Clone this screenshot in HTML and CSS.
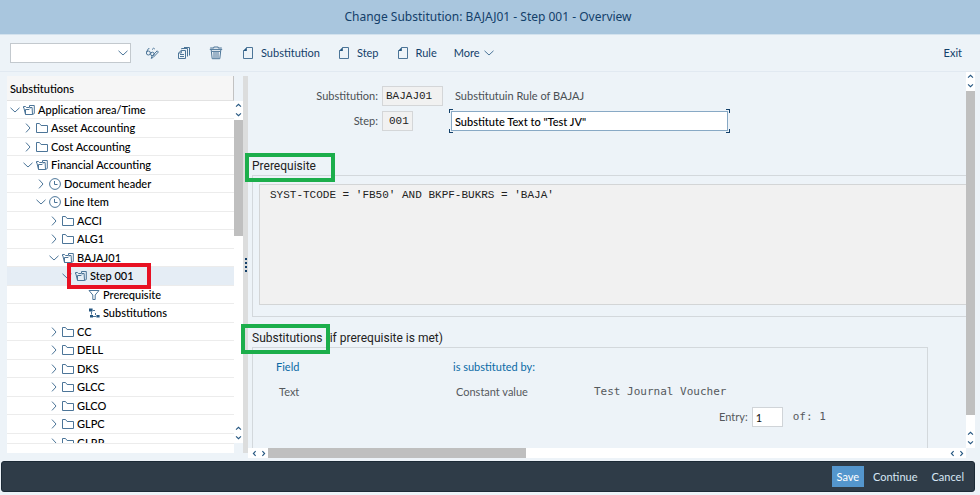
FILE: index.html
```html
<!DOCTYPE html>
<html lang="en">
<head>
  <meta charset="UTF-8" />
  <meta name="viewport" content="width=device-width, initial-scale=1.0"/>
  <title>Change Substitution: BAJAJ01 - Step 001 - Overview</title>
  <link rel="stylesheet" href="styles.css">
</head>
<body>

  <!-- Icon set -->
  <svg class="sprite" aria-hidden="true">
    <symbol id="right" viewBox="0 0 10 10"><path d="M3 .6 7 5 3 9.4"/></symbol>
    <symbol id="down" viewBox="0 0 10 10"><path d="M.5 2.8 5 7 9.5 2.8"/></symbol>
    <symbol id="folder" viewBox="0 0 12 12"><path d="M.5 10.5v-9h3l1.6 2h6.4v7z"/></symbol>
    <symbol id="folder-open" viewBox="0 0 12 12"><path d="M2.5 10.5.8 3.5M.5 4V2.5h2l1 1h2.5"/><path d="M2.5 10.5h7l1.8-1v-8H6.5v2h2.6l.4 7M2.5 10.5v-5h3.6l1-1"/></symbol>
    <symbol id="clock" viewBox="0 0 12 12"><circle cx="6" cy="6" r="5.4"/><path d="M5.5 3v3.5h3"/></symbol>
    <symbol id="filter" viewBox="0 0 12 12"><path d="M1 1.5h10L7.2 6v4.5H4.8V6z"/></symbol>
    <symbol id="flow" viewBox="0 0 12 12"><path class="solid" d="M1 1.5h3.6v3H1zM2 8h3v2.6H2zM8.4 8h3.2v2.6H8.4z"/><path d="M5 3.5h2M3.5 4.5v3M5 9.5h3M7.5 6v2"/></symbol>
    <symbol id="page" viewBox="0 0 12 14"><path d="M4.5 1.5h6v11h-9v-8"/><path class="solid" d="M1 5 4.8 1v4z"/></symbol>
    <symbol id="glasses" viewBox="0 0 14 14"><circle cx="3.4" cy="7" r="2"/><circle cx="7.4" cy="8" r="1.8"/><path d="M1.5 6 3.4 2.6h1M5.2 6.8l.6.4M7 3.6l1.6-1.4 1.2.8M6.2 12.4l.8-2.2 5.2-5.4 1.2 1.2-5.2 5.4z"/></symbol>
    <symbol id="copy" viewBox="0 0 14 14"><path d="M4.2 4.5h4.3v8h-7V7z"/><path d="M4.5 3.2v-.7h6v8M7 1.5h5.5v8M1.5 7h2.8V4.5M3 8.5h4M3 10.5h4"/></symbol>
    <symbol id="trash" viewBox="0 0 14 14"><path d="M.8 3.4h12.4M1.2 2h3.6V1h4.4v1h3.6M2.2 4l1 8.7h7.6l1-8.7M3 5.4h8M5 6v6M7 6v6M9 6v6"/></symbol>
    <symbol id="arrow-up" viewBox="0 0 8 8"><path d="M1.8 5 4 3l2.2 2"/></symbol>
    <symbol id="arrow-down" viewBox="0 0 8 8"><path d="M1.8 3 4 5l2.2-2"/></symbol>
    <symbol id="arrow-left" viewBox="0 0 8 8"><path d="M5 1.8 3 4l2 2.2"/></symbol>
    <symbol id="arrow-right" viewBox="0 0 8 8"><path d="M3 1.8 5 4 3 6.2"/></symbol>
  </svg>

  <header class="titlebar"><h1>Change Substitution: BAJAJ01 - Step 001 - Overview</h1></header>

  <nav class="toolbar" aria-label="Toolbar">
    <div class="command">
      <select aria-label="Command"><option></option></select>
      <svg class="icon"><use href="#down"/></svg>
    </div>
    <button class="tool" aria-label="Display or change"><svg class="icon"><use href="#glasses"/></svg></button>
    <button class="tool" aria-label="Copy"><svg class="icon"><use href="#copy"/></svg></button>
    <button class="tool" aria-label="Delete"><svg class="icon"><use href="#trash"/></svg></button>
    <button class="tool labelled"><svg class="icon"><use href="#page"/></svg>Substitution</button>
    <button class="tool labelled"><svg class="icon"><use href="#page"/></svg>Step</button>
    <button class="tool labelled"><svg class="icon"><use href="#page"/></svg>Rule</button>
    <button class="tool more">More<svg class="icon"><use href="#down"/></svg></button>
    <button class="tool exit">Exit</button>
  </nav>

  <main class="workspace">

    <!-- Tree -->
    <aside class="tree-panel">
      <h2>Substitutions</h2>
      <div class="tree-body">
        <ul class="tree">
          <li class="level-0"><svg class="twist"><use href="#down"/></svg><svg class="icon"><use href="#folder-open"/></svg>Application area/Time</li>
          <li class="level-1"><svg class="twist"><use href="#right"/></svg><svg class="icon"><use href="#folder"/></svg>Asset Accounting</li>
          <li class="level-1"><svg class="twist"><use href="#right"/></svg><svg class="icon"><use href="#folder"/></svg>Cost Accounting</li>
          <li class="level-1"><svg class="twist"><use href="#down"/></svg><svg class="icon"><use href="#folder-open"/></svg>Financial Accounting</li>
          <li class="level-2"><svg class="twist"><use href="#right"/></svg><svg class="icon"><use href="#clock"/></svg>Document header</li>
          <li class="level-2"><svg class="twist"><use href="#down"/></svg><svg class="icon"><use href="#clock"/></svg>Line Item</li>
          <li class="level-3"><svg class="twist"><use href="#right"/></svg><svg class="icon"><use href="#folder"/></svg>ACCI</li>
          <li class="level-3"><svg class="twist"><use href="#right"/></svg><svg class="icon"><use href="#folder"/></svg>ALG1</li>
          <li class="level-3"><svg class="twist"><use href="#down"/></svg><svg class="icon"><use href="#folder-open"/></svg>BAJAJ01</li>
          <li class="level-4 selected"><svg class="twist"><use href="#down"/></svg><svg class="icon"><use href="#folder-open"/></svg>Step 001<span class="mark mark-step"></span></li>
          <li class="level-5"><svg class="icon"><use href="#filter"/></svg>Prerequisite</li>
          <li class="level-5"><svg class="icon"><use href="#flow"/></svg>Substitutions</li>
          <li class="level-3"><svg class="twist"><use href="#right"/></svg><svg class="icon"><use href="#folder"/></svg>CC</li>
          <li class="level-3"><svg class="twist"><use href="#right"/></svg><svg class="icon"><use href="#folder"/></svg>DELL</li>
          <li class="level-3"><svg class="twist"><use href="#right"/></svg><svg class="icon"><use href="#folder"/></svg>DKS</li>
          <li class="level-3"><svg class="twist"><use href="#right"/></svg><svg class="icon"><use href="#folder"/></svg>GLCC</li>
          <li class="level-3"><svg class="twist"><use href="#right"/></svg><svg class="icon"><use href="#folder"/></svg>GLCO</li>
          <li class="level-3"><svg class="twist"><use href="#right"/></svg><svg class="icon"><use href="#folder"/></svg>GLPC</li>
          <li class="level-3"><svg class="twist"><use href="#right"/></svg><svg class="icon"><use href="#folder"/></svg>GLRR</li>
        </ul>
        <div class="vscroll">
          <div class="arrows"><svg><use href="#arrow-up"/></svg><svg><use href="#arrow-down"/></svg></div>
          <div class="track"><div class="thumb tree-thumb"></div></div>
          <div class="arrows"><svg><use href="#arrow-up"/></svg><svg><use href="#arrow-down"/></svg></div>
        </div>
      </div>
      <div class="tree-foot"></div>
    </aside>

    <div class="splitter"><i></i><i></i><i></i><i></i></div>

    <!-- Detail -->
    <section class="detail">
      <div class="detail-view">
        <div class="content">
          <form class="keys">
            <label for="subst">Substitution:</label>
            <input id="subst" class="locked" size="7" value="BAJAJ01" readonly>
            <span class="note">Substitutuin Rule of BAJAJ</span>
            <label for="step">Step:</label>
            <input id="step" class="locked short" value="001" readonly>
            <div class="focus"><input class="text" aria-label="Step text" value='Substitute Text to "Test JV"'></div>
          </form>

          <section class="group">
            <h3>Prerequisite<span class="mark mark-prereq"></span></h3>
            <div class="frame open">
              <textarea class="formula" aria-label="Prerequisite" readonly>SYST-TCODE = 'FB50' AND BKPF-BUKRS = 'BAJA'</textarea>
            </div>
          </section>

          <section class="group">
            <h3>Substitutions (if prerequisite is met)<span class="mark mark-subst"></span></h3>
            <div class="frame rules">
              <table>
                <thead>
                  <tr><th>Field</th><th>is substituted by:</th><th></th></tr>
                </thead>
                <tbody>
                  <tr><td>Text</td><td>Constant value</td><td class="mono">Test Journal Voucher</td></tr>
                </tbody>
              </table>
              <div class="entry">
                <label for="entry">Entry:</label>
                <input id="entry" value="1">
                <span class="mono">of: 1</span>
              </div>
            </div>
          </section>
        </div>
        <div class="hscroll">
          <div class="arrows"><svg><use href="#arrow-left"/></svg><svg><use href="#arrow-right"/></svg></div>
          <div class="track"><div class="thumb"></div></div>
          <div class="arrows"><svg><use href="#arrow-left"/></svg><svg><use href="#arrow-right"/></svg></div>
        </div>
      </div>
      <div class="vscroll page-scroll">
        <div class="arrows"><svg><use href="#arrow-up"/></svg><svg><use href="#arrow-down"/></svg></div>
        <div class="track"><div class="thumb page-thumb"></div></div>
        <div class="arrows"><svg><use href="#arrow-up"/></svg><svg><use href="#arrow-down"/></svg></div>
      </div>
    </section>
  </main>

  <footer class="footer">
    <button class="primary">Save</button>
    <button>Continue</button>
    <button>Cancel</button>
  </footer>

</body>
</html>
```

FILE: styles.css
```css
* {
  box-sizing: border-box;
}

body {
  margin: 0;
  height: 100vh;
  display: flex;
  flex-direction: column;
  overflow: hidden;
  background: #edf3f8;
  color: #000;
  font: 11px/18px Lato, sans-serif;
}

h1, h2, h3, ul {
  margin: 0;
  padding: 0;
  font-weight: 400;
}

button, input, select, textarea {
  margin: 0;
  font: inherit;
  color: inherit;
}

button {
  border: 0;
  background: none;
}

svg {
  flex: none;
  fill: none;
  stroke: #4c7598;
  stroke-width: 1;
}

.solid {
  fill: #245680;
  stroke: none;
}

.sprite {
  position: absolute;
  width: 0;
  height: 0;
}

.mono {
  font-family: "DejaVu Sans Mono", monospace;
}

/* Title and toolbar */
.titlebar {
  flex: none;
  height: 35px;
  background: #a9c6de;
  border-bottom: 1px solid #d3e2ee;
  text-align: center;
}

.titlebar h1 {
  padding-right: 4px;
  font-family: "Noto Sans", sans-serif;
  font-size: 12px;
  line-height: 33px;
  color: #13406a;
}

.toolbar {
  flex: none;
  display: flex;
  align-items: center;
  height: 37px;
  padding: 0 18px 0 10px;
  border-bottom: 1px solid #e1e9f1;
  color: #13406a;
}

.command {
  position: relative;
  width: 121px;
  margin-right: 14px;
}

.command select {
  appearance: none;
  display: block;
  width: 100%;
  height: 20px;
  background: #fff;
  border: 1px solid #c3c9ce;
}

.command .icon {
  position: absolute;
  top: 5px;
  right: 3px;
  width: 10px;
  height: 10px;
}

.tool {
  display: flex;
  align-items: center;
  padding: 0;
  margin-right: 18px;
}

.tool .icon {
  width: 14px;
  height: 14px;
}

.labelled {
  gap: 6px;
  margin-right: 17px;
}

.more {
  gap: 4px;
}

.more .icon {
  width: 10px;
  height: 10px;
}

.exit {
  margin: 0 0 0 auto;
}

.workspace {
  flex: 1;
  display: flex;
  min-height: 0;
  padding: 0 5px 0 7px;
}

/* Tree */
.tree-panel {
  width: 236px;
  flex: none;
  display: flex;
  flex-direction: column;
  margin: 4px 0 5px;
}

.tree-panel h2 {
  flex: none;
  height: 25px;
  margin-right: 9px;
  padding-left: 3px;
  background: #f6f6f6;
  border: solid #e2e2e2;
  border-width: 0 1px 1px 0;
  border-right-color: #c2c2c2;
  font-size: 11px;
  font-weight: 500;
  line-height: 25px;
}

.tree-body {
  flex: 1;
  display: flex;
  min-height: 0;
}

.tree {
  flex: 1;
  overflow: hidden;
  background: #fff;
  list-style: none;
}

.tree li {
  position: relative;
  display: flex;
  align-items: center;
  height: 18px;
  border-bottom: 1px solid #ececec;
  font-weight: 500;
  white-space: nowrap;
}

.tree li:nth-child(even) {
  height: 19px;
}

.tree .twist {
  width: 10px;
  height: 10px;
  margin-right: 3px;
}

.tree .icon {
  width: 12px;
  height: 12px;
  margin-right: 3px;
}

.level-0 { padding-left: 3px; }
.level-1 { padding-left: 16px; }
.level-2 { padding-left: 29px; }
.level-3 { padding-left: 42px; }
.level-4 { padding-left: 55px; }
.level-5 { padding-left: 81px; }

.tree .selected {
  background: #e5edf5;
}

.tree-foot {
  flex: none;
  height: 10px;
  margin-right: 9px;
  background: #fff;
  border-top: 1px solid #ececec;
}

/* Scrollbars */
.vscroll {
  flex: none;
  display: flex;
  flex-direction: column;
  width: 9px;
  background: #fff;
}

.arrows {
  flex: none;
  display: flex;
}

.arrows svg {
  width: 9px;
  height: 9px;
  stroke: #245680;
}

.vscroll .arrows {
  flex-direction: column;
  padding-bottom: 1px;
}

.track {
  flex: 1;
}

.thumb {
  background: #bfbfbf;
}

.tree-thumb {
  height: 38%;
}

.page-thumb {
  height: 96%;
}

.page-scroll {
  margin-bottom: 10px;
}

.hscroll {
  flex: none;
  display: flex;
  align-items: center;
  height: 10px;
  padding-left: 2px;
  background: #fff;
}

.hscroll .thumb {
  width: 38%;
  height: 10px;
}

.splitter {
  flex: none;
  display: flex;
  flex-direction: column;
  justify-content: center;
  align-items: center;
  gap: 2px;
  width: 5px;
  margin: 4px 0 5px;
  background: #dcdddd;
}

.splitter i {
  width: 2px;
  height: 2px;
  background: #13406a;
}

/* Detail */
.detail {
  flex: 1;
  display: flex;
  min-width: 0;
}

.detail-view {
  flex: 1;
  display: flex;
  flex-direction: column;
  min-width: 0;
}

/* reaches over the splitter so the callouts are not clipped */
.content {
  flex: 1;
  min-height: 0;
  overflow: hidden;
  margin-left: -8px;
  padding: 14px 0 0 12px;
}

.keys {
  display: grid;
  grid-template-columns: 126px 65px 1fr;
  gap: 5px 4px;
  align-items: center;
  color: #4a4f54;
}

.keys label {
  text-align: right;
}

.keys .locked {
  width: 61px;
  height: 20px;
  padding: 0 3px;
  background: #f1f1f1;
  border: 1px solid #d4d6d8;
  color: #222;
  font-family: "Liberation Mono", monospace;
}

.keys .short {
  width: 31px;
  padding-left: 6px;
}

.note {
  padding-left: 4px;
}

/* corner brackets round the focused field */
.focus {
  width: 281px;
  margin: -2px;
  padding: 2px;
  background:
    linear-gradient(#13406a, #13406a) 0 0 / 4px 1px,
    linear-gradient(#13406a, #13406a) 0 0 / 1px 4px,
    linear-gradient(#13406a, #13406a) 100% 0 / 4px 1px,
    linear-gradient(#13406a, #13406a) 100% 0 / 1px 4px,
    linear-gradient(#13406a, #13406a) 0 100% / 4px 1px,
    linear-gradient(#13406a, #13406a) 0 100% / 1px 4px,
    linear-gradient(#13406a, #13406a) 100% 100% / 4px 1px,
    linear-gradient(#13406a, #13406a) 100% 100% / 1px 4px;
  background-repeat: no-repeat;
}

.focus .text {
  display: block;
  width: 100%;
  height: 20px;
  padding: 0 3px;
  background: #fff;
  border: 1px solid #88a9c5;
  color: #000;
  font-weight: 500;
}

.group h3 {
  position: relative;
  font-family: Roboto, sans-serif;
  font-size: 12px;
  line-height: 18px;
  color: #222;
}

.group {
  margin-top: 12px;
}

.keys + .group {
  margin-top: 26px;
}

.frame {
  border: 1px solid #d3d8dc;
}

.frame.open {
  padding: 8px 0 11px 6px;
  border-right: 0;
}

.formula {
  display: block;
  width: 100%;
  height: 121px;
  padding: 1px 10px;
  resize: none;
  background: #f1f1f1;
  border: 1px solid #d3d5d6;
  border-width: 1px 0 1px 1px;
  outline: 0;
  color: #222;
  font-family: "Liberation Mono", monospace;
}

.rules {
  height: 140px;
  margin-right: 38px;
  padding: 10px 0 0 23px;
}

.rules table {
  border-collapse: collapse;
  color: #55595d;
}

.rules th {
  height: 18px;
  padding: 0;
  color: #0a6aa6;
  font-weight: 400;
  text-align: left;
}

.rules th:nth-child(-n+2) {
  width: 177px;
}

.rules th:nth-child(2) {
  width: 138px;
}

.rules td {
  height: 31px;
  padding: 0 0 0 3px;
}

.entry {
  display: flex;
  align-items: center;
  gap: 4px;
  padding-left: 443px;
  color: #55595d;
}

.entry input {
  width: 31px;
  height: 20px;
  padding: 0 3px;
  background: #fff;
  border: 1px solid #d0d4d8;
  color: #111;
}

.entry .mono {
  padding-left: 6px;
}

/* Callout boxes */
.mark {
  position: absolute;
  border: 4px solid #1cae4b;
}

.mark-step {
  top: -4px;
  left: 60px;
  width: 84px;
  height: 26px;
  border-color: #e81123;
  z-index: 1;
}

.mark-prereq {
  top: -4px;
  left: -7px;
  width: 90px;
  height: 29px;
}

.mark-subst {
  top: -5px;
  left: -11px;
  width: 89px;
  height: 30px;
}

/* Footer */
.footer {
  flex: none;
  display: flex;
  justify-content: flex-end;
  align-items: center;
  gap: 4px;
  height: 31px;
  margin: 3px 5px 3px 1px;
  padding-right: 5px;
  background: #2f3c48;
  border: 1px solid #1c2a36;
  border-radius: 3px;
  color: #d8e8f5;
}

.footer button {
  height: 21px;
  padding: 0 5px;
}

.footer .primary {
  background: #5496cd;
  color: #fff;
}
```
